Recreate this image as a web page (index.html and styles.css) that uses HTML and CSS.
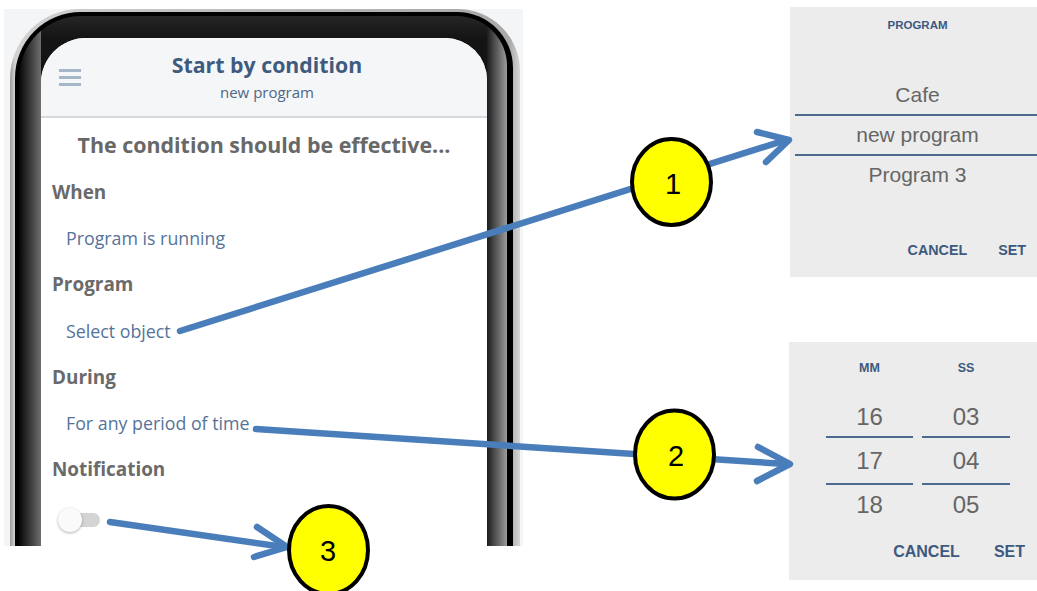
FILE: index.html
```html
<!doctype html>
<html lang="en">
<head>
    <meta charset="UTF-8">
    <title>Start by condition</title>
    <link rel="stylesheet" href="styles.css">
</head>
<body>

<div class="page">
    <div class="shot">
        <div class="phone">
            <div class="ring">
                <div class="bezel">
                    <div class="screen">
                        <div class="bar">
                            <span class="burger"><i></i><i></i><i></i></span>
                            <div class="heading">
                                <div class="title">Start by condition</div>
                                <div class="subtitle">new program</div>
                            </div>
                        </div>
                        <div class="form">
                            <div class="lead">The condition should be effective...</div>
                            <div class="label">When</div>
                            <div class="value">Program is running</div>
                            <div class="label">Program</div>
                            <div class="value">Select object</div>
                            <div class="label">During</div>
                            <div class="value">For any period of time</div>
                            <div class="label">Notification</div>
                            <div class="switch">
                                <span class="track"></span>
                                <span class="knob"></span>
                            </div>
                        </div>
                    </div>
                </div>
            </div>
        </div>
    </div>

    <div class="dialogs">
        <div class="dialog program-dialog">
            <div class="dialog-title">PROGRAM</div>
            <div class="wheel">
                <div class="wheel-item">Cafe</div>
                <div class="wheel-item selected">new program</div>
                <div class="wheel-item">Program 3</div>
            </div>
            <div class="dialog-actions">
                <span>CANCEL</span>
                <span>SET</span>
            </div>
        </div>

        <div class="dialog time-dialog">
            <div class="columns">
                <div class="column mm">
                    <div class="dialog-title">MM</div>
                    <div class="digit">16</div>
                    <div class="digit selected">17</div>
                    <div class="digit">18</div>
                </div>
                <div class="column ss">
                    <div class="dialog-title">SS</div>
                    <div class="digit">03</div>
                    <div class="digit selected">04</div>
                    <div class="digit">05</div>
                </div>
            </div>
            <div class="dialog-actions">
                <span>CANCEL</span>
                <span>SET</span>
            </div>
        </div>
    </div>

    <!-- callouts -->
    <svg class="notes" width="1037" height="591" viewBox="0 0 1037 591">
        <g class="arrow">
            <line x1="180" y1="331" x2="786" y2="140"/>
            <polyline points="757,132 789,140 766,162"/>
            <line x1="256" y1="429" x2="786" y2="464"/>
            <polyline points="758,447 790,464 757,481"/>
            <line x1="110" y1="522" x2="284" y2="547"/>
            <polyline points="257,527 287,547 254,557"/>
        </g>
        <g class="badge">
            <ellipse cx="671.5" cy="182" rx="39.5" ry="43"/>
            <ellipse cx="674.5" cy="454.5" rx="39.5" ry="44"/>
            <ellipse cx="328.5" cy="550" rx="39.5" ry="44"/>
        </g>
        <g class="badge-num">
            <text x="673" y="193.5">1</text>
            <text x="676" y="465.5">2</text>
            <text x="328" y="560.5">3</text>
        </g>
    </svg>
</div>

</body>
</html>
```

FILE: styles.css
```css
*{margin:0;padding:0;box-sizing:border-box;}
body{
    background:#fff;
}
.page{
    position:relative;
    width:1037px;
    height:591px;
    display:flex;
    overflow:hidden;
}

/* phone screenshot */
.shot{
    width:519px;
    height:537px;
    margin:9px 0 0 4px;
    padding-left:6px;
    background:#f4f5f7;
    overflow:hidden;
}
.phone{
    width:510px;
    height:640px;
    padding:3px 7px 0 5px;
    border-radius:70px 62px 0 0;
    background:linear-gradient(to right,#9a9a9a,#d2d2d2 5px,#b9b9b9 50%,#a9a9a9 98%,#d6d6d6);
}
.ring{
    height:100%;
    padding:4px 6px 0 4px;
    border-radius:66px 56px 0 0;
    background:#000;
}
.bezel{
    height:100%;
    padding:22px 20px 0 22px;
    border-radius:62px 50px 0 0;
    background:
        linear-gradient(to right,#050505,#6e6e6e) left top/22px 100% no-repeat,
        linear-gradient(to right,#1c1c1c,#9c9c9c) right top/20px 100% no-repeat,
        linear-gradient(to bottom,#262626,#141414 22px);
}
.screen{
    height:100%;
    border-radius:45px 42px 0 0;
    background:#fff;
    overflow:hidden;
    font-family:"Open Sans","Noto Sans",sans-serif;
}
.bar{
    display:flex;
    align-items:center;
    height:80px;
    background:#f5f6f8;
    border-bottom:2px solid #d6d9dd;
}
.burger{
    display:flex;
    flex-direction:column;
    gap:4px;
    width:22px;
    margin-left:18px;
}
.burger i{
    display:block;
    height:3px;
    background:#a5b6c9;
}
.heading{
    flex:1;
    margin-right:34px;
    text-align:center;
}
.title{
    font-size:21.3px;
    font-weight:700;
    line-height:24px;
    color:#3e5b7d;
}
.subtitle{
    margin-top:6px;
    font-size:15px;
    line-height:19px;
    color:#4d6886;
}
.form{
    padding:2.5px 0 0 11px;
}
.lead{
    margin-left:-11px;
    font-size:21.4px;
    font-weight:700;
    line-height:48px;
    text-align:center;
    color:#686868;
}
.label{
    font-size:18.9px;
    font-weight:700;
    line-height:46.5px;
    color:#6a6a6a;
}
.value{
    padding-left:14px;
    font-size:17.8px;
    line-height:46px;
    color:#56739a;
}
.switch{
    position:relative;
    width:42px;
    height:24px;
    margin:15.5px 0 0 6px;
}
.track{
    position:absolute;
    left:12px;
    top:5px;
    width:30px;
    height:14px;
    border-radius:7px;
    background:#d4d4d4;
}
.knob{
    position:absolute;
    left:0;
    top:0;
    width:24px;
    height:24px;
    border-radius:50%;
    background:#fafafa;
    box-shadow:0 1px 3px rgba(0,0,0,.3);
}

/* picker dialogs */
.dialogs{
    display:flex;
    flex-direction:column;
    margin-left:267px;
    font-family:"Liberation Sans",Arial,sans-serif;
}
.dialog{
    background:#ececec;
}
.dialog-title{
    font-weight:700;
    text-align:center;
    color:#3d5a7e;
}
.dialog-actions{
    display:flex;
    justify-content:flex-end;
    font-weight:700;
    color:#3d5a7e;
}
.program-dialog{
    width:247px;
    height:270px;
    margin-top:7px;
    padding:10.5px 0 0 8px;
}
.program-dialog .dialog-title{
    font-size:11.5px;
    line-height:14px;
}
.wheel{
    margin:44.5px 0 0 -3px;
}
.wheel-item{
    padding-left:3px;
    font-size:21px;
    line-height:38px;
    text-align:center;
    color:#666;
}
.wheel-item.selected,.digit.selected{
    border-top:2px solid #4c6a8d;
    border-bottom:2px solid #4c6a8d;
}
.program-dialog .dialog-actions{
    gap:31px;
    margin-top:46px;
    padding-right:11px;
    font-size:14.3px;
    line-height:20px;
}
.time-dialog{
    width:248px;
    height:238px;
    margin:65px 0 0 -1px;
    padding:18.5px 0 0 37px;
}
.columns{
    display:flex;
    gap:9px;
}
.column.mm{width:87px;}
.column.ss{width:88px;}
.time-dialog .dialog-title{
    margin-bottom:21.5px;
    font-size:12.5px;
    line-height:15px;
}
.digit{
    font-size:24px;
    line-height:39px;
    text-align:center;
    color:#666;
}
.digit.selected{
    line-height:45px;
}
.time-dialog .dialog-actions{
    gap:34px;
    margin-top:18px;
    padding-right:12px;
    font-size:16px;
    line-height:20px;
}

/* callouts */
.notes{
    position:absolute;
    left:0;
    top:0;
    pointer-events:none;
}
.arrow{
    fill:none;
    stroke:#4a7ebb;
    stroke-width:6.5;
    stroke-linecap:round;
    stroke-linejoin:round;
}
.badge{
    fill:#ffff00;
    stroke:#000;
    stroke-width:4;
}
.badge-num{
    font-family:"Liberation Sans",Arial,sans-serif;
    font-size:29px;
    text-anchor:middle;
    fill:#000;
}
```
